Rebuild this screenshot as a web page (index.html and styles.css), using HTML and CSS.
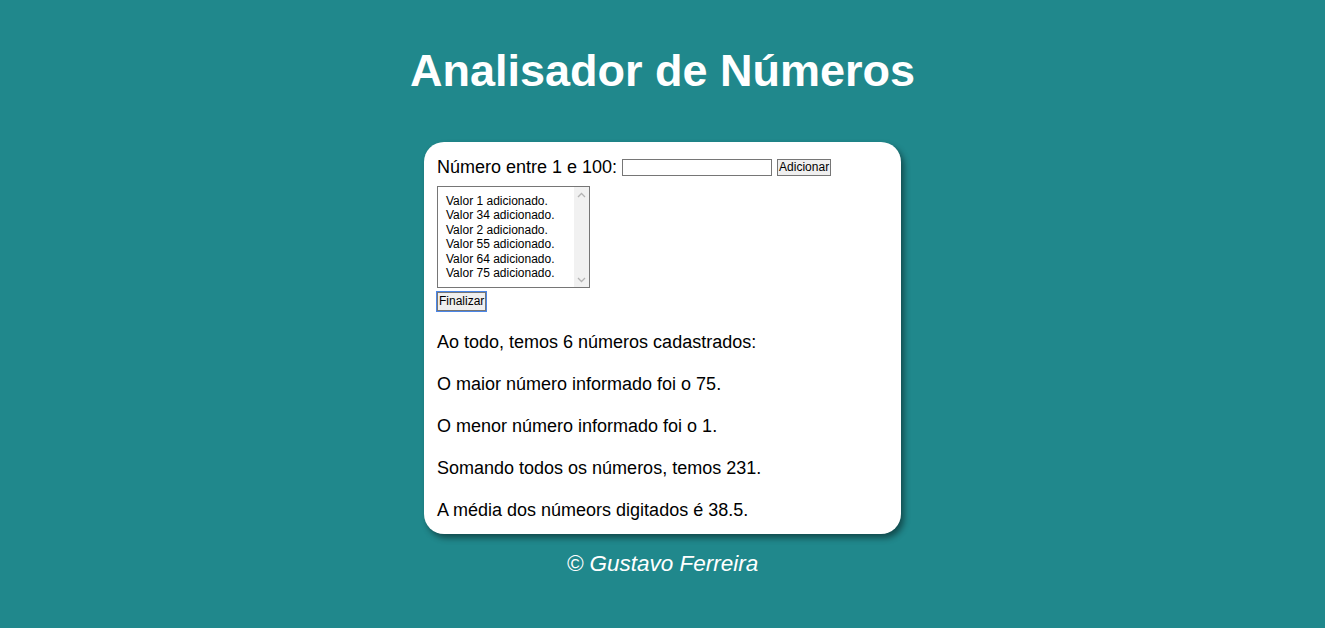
FILE: index.html
```html
<!DOCTYPE html>
<html lang="pt-BR">
<head>
<meta charset="utf-8">
<title>Analisador de Números</title>
<link rel="stylesheet" href="styles.css">
</head>
<body>
<header class="top">
  <h1 class="title">Analisador de Números</h1>
</header>
<main class="card">
  <div class="row">
    <label class="lbl" for="num">Número entre 1 e 100:</label>
    <input class="txt" type="number" id="num">
    <button class="btn" type="button">Adicionar</button>
  </div>
  <div class="listbox">
    <select class="list" id="lista" size="6">
      <option>Valor 1 adicionado.</option>
      <option>Valor 34 adicionado.</option>
      <option>Valor 2 adicionado.</option>
      <option>Valor 55 adicionado.</option>
      <option>Valor 64 adicionado.</option>
      <option>Valor 75 adicionado.</option>
    </select>
    <div class="sbar" aria-hidden="true">
      <svg class="arrow" width="9" height="6" viewBox="0 0 9 6"><path d="M1 5 L4.5 1.5 L8 5" fill="none" stroke="#b4b4b4" stroke-width="1.3"/></svg>
      <svg class="arrow" width="9" height="6" viewBox="0 0 9 6"><path d="M1 1 L4.5 4.5 L8 1" fill="none" stroke="#b4b4b4" stroke-width="1.3"/></svg>
    </div>
  </div>
  <div class="actions">
    <button class="btn btn-focus" type="button">Finalizar</button>
  </div>
  <div class="res">
    <p>Ao todo, temos 6 números cadastrados:</p>
    <p>O maior número informado foi o 75.</p>
    <p>O menor número informado foi o 1.</p>
    <p>Somando todos os números, temos 231.</p>
    <p>A média dos númeors digitados é 38.5.</p>
  </div>
</main>
<footer class="foot">
  <p class="copy">&copy; Gustavo Ferreira</p>
</footer>
</body>
</html>
```
FILE: styles.css
```css
html, body {
  margin: 0;
  padding: 0;
}
body {
  background: #20888c;
  font-family: "Liberation Sans", Arial, sans-serif;
  color: #000;
}
.top {
  padding-top: 43px;
  text-align: center;
}
.title {
  margin: 0;
  color: #fff;
  font-size: 45px;
  font-weight: bold;
  line-height: 56px;
}
.card {
  width: 451px;
  margin: 43px auto 0;
  padding: 15px 13px 14px;
  background: #fff;
  border-radius: 20px;
  box-shadow: 3px 4px 6px rgba(0, 0, 0, 0.45);
}
.row {
  display: flex;
  align-items: center;
  gap: 4px;
  height: 20px;
}
.lbl {
  font-size: 18px;
}
.txt {
  box-sizing: border-box;
  width: 150px;
  height: 17px;
  margin: 0 0 0 1px;
  padding: 0 2px;
  border: 1px solid #767676;
  font: 12px "Liberation Sans", Arial, sans-serif;
}
.btn {
  box-sizing: border-box;
  height: 17px;
  margin: 0 0 0 1px;
  padding: 0 1px;
  border: 1px solid #767676;
  border-radius: 0;
  background: #efefef;
  font: 12px "Liberation Sans", Arial, sans-serif;
  color: #000;
  line-height: 14px;
}
.listbox {
  display: flex;
  box-sizing: border-box;
  width: 153px;
  height: 102px;
  margin-top: 9px;
  border: 1px solid #767676;
  background: #fff;
}
.list {
  flex: 1;
  min-width: 0;
  height: 100%;
  margin: 0;
  padding: 7px 0 0 8px;
  border: none;
  outline: none;
  font: 12px "Liberation Sans", Arial, sans-serif;
  overflow: hidden;
}
.list option {
  padding: 0;
  line-height: 14.4px;
}
.sbar {
  display: flex;
  flex-direction: column;
  justify-content: space-between;
  align-items: center;
  width: 15px;
  padding: 5px 0 4px;
  box-sizing: border-box;
  background: #f1f1f1;
}
.arrow {
  display: block;
}
.actions {
  margin-top: 3px;
}
.btn-focus {
  height: 19px;
  margin: 0;
  padding: 0 1px;
  border: 1px solid #767676;
  outline: 1px solid #4a86e8;
  outline-offset: 0;
}
.res {
  margin-top: 21px;
}
.res p {
  margin: 0 0 22px;
  font-size: 18px;
  line-height: 20px;
}
.res p:last-child {
  margin-bottom: 0;
}
.foot {
  text-align: center;
}
.copy {
  margin: 17px 0 0;
  color: #fff;
  font-size: 22.5px;
  font-style: italic;
}
```
